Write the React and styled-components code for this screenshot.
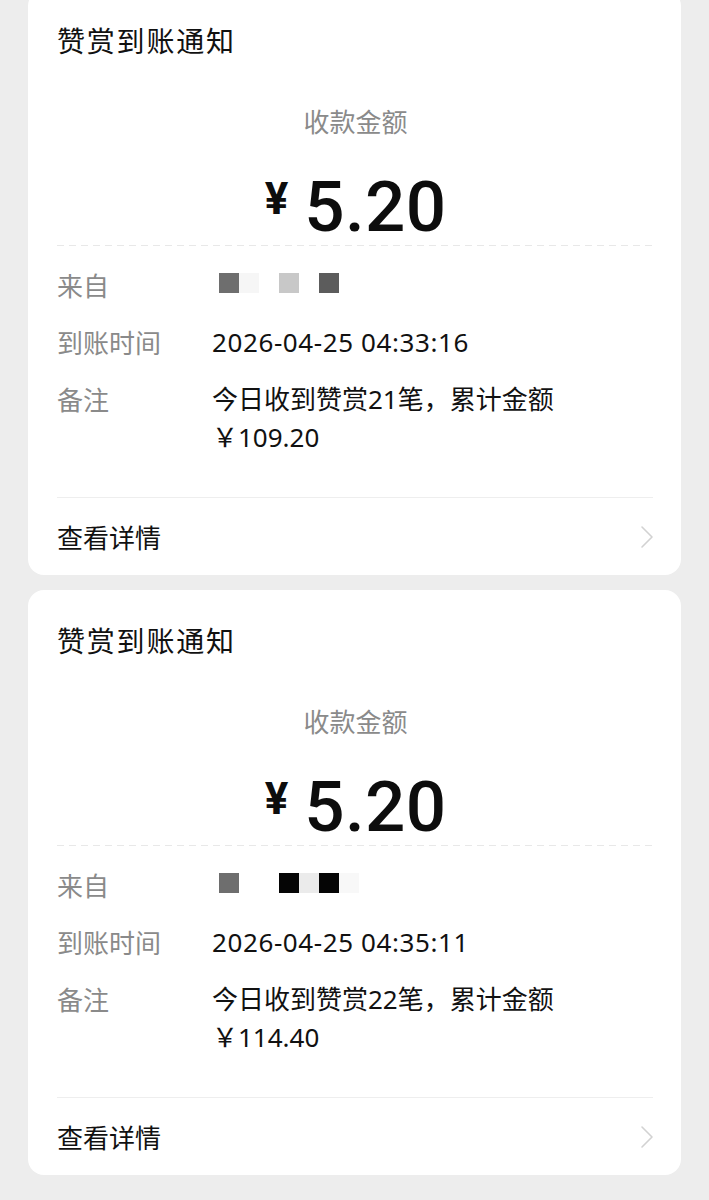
import React from "react";
import styled, { createGlobalStyle } from "styled-components";

const Global = createGlobalStyle`
  html, body {
    margin: 0;
    padding: 0;
    background: #ededed;
  }
  body {
    font-family: "Noto Sans", "Noto Sans CJK SC", sans-serif;
    -webkit-font-smoothing: antialiased;
  }
`;

const Page = styled.div`
  display: flex;
  flex-direction: column;
  gap: 15px;
  margin-top: -10px;
  padding: 0 28px 25px;
`;

const Card = styled.section`
  background: #ffffff;
  border-radius: 16px;
  padding: 0 27px 0 29px;
  display: flex;
  flex-direction: column;
`;

const Title = styled.h2`
  margin: 32px 0 0;
  font-family: "Noto Sans CJK SC", sans-serif;
  font-size: 28px;
  line-height: 36px;
  font-weight: 400;
  letter-spacing: 1.8px;
  color: #111;
`;

const Caption = styled.div`
  margin-top: 45px;
  text-align: center;
  font-family: "Noto Sans CJK SC", sans-serif;
  font-size: 26px;
  line-height: 36px;
  color: #8a8a8a;
`;

const AmountRow = styled.div`
  margin-top: 30px;
  height: 76px;
  display: flex;
  align-items: center;
  justify-content: center;
  gap: 16px;
  font-family: Roboto, "Liberation Sans", sans-serif;
  color: #0d0d0d;
`;

const Currency = styled.span`
  font-size: 44px;
  line-height: 44px;
  font-weight: 700;
  margin-bottom: 16px;
`;

const Figure = styled.span`
  font-size: 71px;
  line-height: 76px;
  font-weight: 500;
  letter-spacing: 0.3px;
`;

const Dashed = styled.div`
  height: 1px;
  background-image: linear-gradient(to right, #e8e8e8 60%, transparent 0);
  background-size: 12px 1px;
`;

const Rows = styled.div`
  margin-top: 20px;
  display: flex;
  flex-direction: column;
  gap: 19px;
`;

const Row = styled.div`
  display: flex;
  font-size: 26px;
  line-height: 38px;
`;

const Label = styled.div`
  width: 155px;
  flex-shrink: 0;
  font-family: "Noto Sans CJK SC", sans-serif;
  color: #8a8a8a;
`;

const Value = styled.div`
  flex: 1;
  color: #111;
  letter-spacing: ${(p) => (p.$num ? "0.6px" : "0")};
  font-family: "Noto Sans", "Noto Sans CJK SC", sans-serif;
`;

const Mosaic = styled.div`
  display: flex;
  align-items: center;
  height: 38px;
  margin-left: 7px;
`;

const Block = styled.span`
  width: 20px;
  height: 20px;
  background: ${(p) => p.$c};
  margin-top: -4px;
`;

const Divider = styled.div`
  margin-top: 41px;
  height: 1px;
  background: #eeeeee;
  margin-right: 1px;
`;

const Footer = styled.div`
  height: 77px;
  display: flex;
  align-items: center;
  justify-content: space-between;
  font-family: "Noto Sans CJK SC", sans-serif;
  font-size: 26px;
  color: #111;
`;

const Chevron = () => (
  <svg width="14" height="24" viewBox="0 0 14 24" fill="none">
    <polyline
      points="2,2 12,12 2,22"
      stroke="#d2d2d2"
      strokeWidth="1.6"
      strokeLinecap="round"
      strokeLinejoin="round"
    />
  </svg>
);

const data = [
  {
    blocks: ["#6e6e6e", "#f6f6f6", "#ffffff", "#c8c8c8", "#ffffff", "#5c5c5c"],
    time: "2026-04-25 04:33:16",
    note: "今日收到赞赏21笔，累计金额",
    total: "￥109.20",
  },
  {
    blocks: ["#6e6e6e", "#ffffff", "#ffffff", "#050505", "#ebebeb", "#050505", "#f8f8f8"],
    time: "2026-04-25 04:35:11",
    note: "今日收到赞赏22笔，累计金额",
    total: "￥114.40",
  },
];

function Notice({ item }) {
  return (
    <Card>
      <Title>赞赏到账通知</Title>
      <Caption>收款金额</Caption>
      <AmountRow>
        <Currency>¥</Currency>
        <Figure>5.20</Figure>
      </AmountRow>
      <Dashed />
      <Rows>
        <Row>
          <Label>来自</Label>
          <Value>
            <Mosaic>
              {item.blocks.map((c, i) => (
                <Block key={i} $c={c} />
              ))}
            </Mosaic>
          </Value>
        </Row>
        <Row>
          <Label>到账时间</Label>
          <Value $num>{item.time}</Value>
        </Row>
        <Row>
          <Label>备注</Label>
          <Value>
            {item.note}
            <br />
            {item.total}
          </Value>
        </Row>
      </Rows>
      <Divider />
      <Footer>
        <span>查看详情</span>
        <Chevron />
      </Footer>
    </Card>
  );
}

export default function App() {
  return (
    <>
      <Global />
      <Page>
        {data.map((d, i) => (
          <Notice key={i} item={d} />
        ))}
      </Page>
    </>
  );
}
